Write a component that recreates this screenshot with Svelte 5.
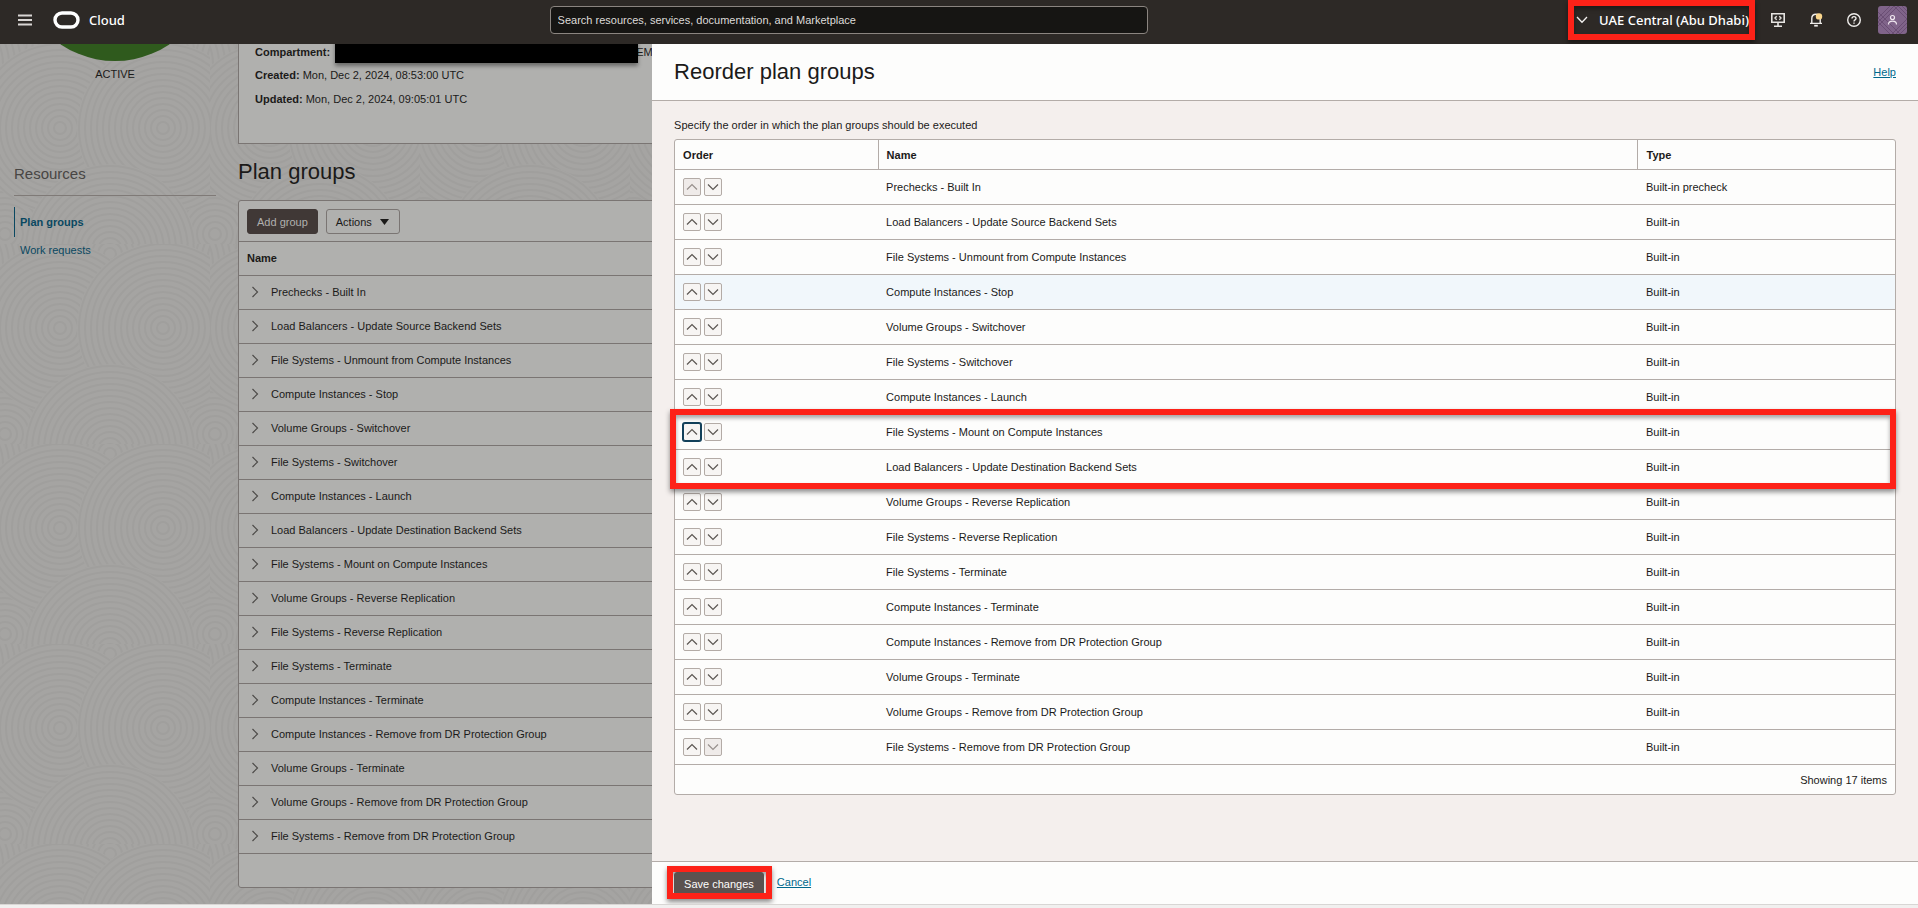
<script>
  const groups = [
    'Prechecks - Built In',
    'Load Balancers - Update Source Backend Sets',
    'File Systems - Unmount from Compute Instances',
    'Compute Instances - Stop',
    'Volume Groups - Switchover',
    'File Systems - Switchover',
    'Compute Instances - Launch',
    'Load Balancers - Update Destination Backend Sets',
    'File Systems - Mount on Compute Instances',
    'Volume Groups - Reverse Replication',
    'File Systems - Reverse Replication',
    'File Systems - Terminate',
    'Compute Instances - Terminate',
    'Compute Instances - Remove from DR Protection Group',
    'Volume Groups - Terminate',
    'Volume Groups - Remove from DR Protection Group',
    'File Systems - Remove from DR Protection Group'
  ];

  const swapped = [...groups];
  [swapped[7], swapped[8]] = [swapped[8], swapped[7]];
  let order = $state(swapped);

  function move(index, step) {
    const next = [...order];
    [next[index], next[index + step]] = [next[index + step], next[index]];
    order = next;
  }

  const rings = Array.from({ length: 14 }, (_, i) => 6 + i * 6);
  const swirls = [
    [-45, 20], [255, 20], [110, 10], [5, 190], [215, 190], [60, 84], [163, 84], [110, 206]
  ];
</script>

<div class="page">
  <header class="topbar">
    <button class="bare menu" aria-label="Navigation menu">
      <svg width="14" height="12" viewBox="0 0 14 12"><path d="M0 1.5h14M0 6h14M0 10.5h14" stroke="#d9d6d4" stroke-width="2" /></svg>
    </button>
    <a class="brand" href="#home">
      <svg width="27" height="18" viewBox="0 0 27 18"><rect x="2" y="2" width="23" height="14" rx="7" fill="none" stroke="#fff" stroke-width="3.4" /></svg>
      <span>Cloud</span>
    </a>
    <input class="search" type="text" aria-label="Search" placeholder="Search resources, services, documentation, and Marketplace" />
    <div class="tools">
      <button class="bare region marked">
        <svg width="12" height="8" viewBox="0 0 12 8"><path d="M1 1l5 5.2L11 1" fill="none" stroke="#f4f2f1" stroke-width="1.3" /></svg>
        <span>UAE Central (Abu Dhabi)</span>
      </button>
      <button class="bare" aria-label="Developer tools">
        <svg width="16" height="16" viewBox="0 0 16 16" fill="none" stroke="#e6e4e1" stroke-width="1.6">
          <path d="M1.8 1.8h12.4v8.4H1.8zM8 10.3v3.4M4 14.2h8" />
          <path d="M6.7 4.2L5 6l1.7 1.8M9.300 4.200L11 6 9.300 7.800" stroke-width="1.4" />
        </svg>
      </button>
      <button class="bare" aria-label="Announcements">
        <svg width="16" height="16" viewBox="0 0 16 16" fill="none" stroke="#efedeb" stroke-width="1.4">
          <path d="M2 11.400h12M3.800 11.300V6.600C3.800 4 5.400 2.200 8 2.200s4.200 1.800 4.200 4.400v4.700" />
          <path d="M6.200 13.700h3.600" stroke-width="1.800" />
          <circle cx="11" cy="4.400" r="3.200" fill="#f9d58c" stroke="none" />
        </svg>
      </button>
      <button class="bare" aria-label="Help">
        <svg width="16" height="16" viewBox="0 0 16 16" fill="none" stroke="#efedeb" stroke-width="1.400">
          <circle cx="8" cy="8" r="6.300" />
          <path d="M6 6.600C6 5.300 6.900 4.600 8 4.600s2 .7 2 1.800c0 1.500-2 1.500-2 3" />
          <path d="M8 10.400v1.400" />
        </svg>
      </button>
      <button class="bare avatar" aria-label="Profile">
        <svg width="29" height="28" viewBox="0 0 29 28">
          <rect width="29" height="28" fill="#80648a" />
          <path d="M-2 14L12 0M-2 18L16 0M-2 22L20 0M0 6l22 22M-2 10l18 18M-2 14l14 14M16 0l14 14M20 0l10 10M24 0l6 6M18 28l12-12M22 28l8-8M14 28l16-16" stroke="#6a4e74" stroke-width="1" />
          <circle cx="14.500" cy="11.500" r="2" fill="none" stroke="#f0e8f0" stroke-width="1.200" />
          <path d="M10.500 18.500c0-2.200 1.500-3.400 4-3.400s4 1.200 4 3.400" fill="none" stroke="#f0e8f0" stroke-width="1.200" />
        </svg>
      </button>
    </div>
  </header>

  <div class="stage">
    <section class="backdrop" aria-label="Plan details">
      <svg class="texture" width="100%" height="100%" aria-hidden="true">
        <defs>
          <pattern id="swirl" width="210" height="200" patternUnits="userSpaceOnUse">
            {#each swirls as [cx, cy]}
              <circle {cx} {cy} r="86" fill="#a5a4a2" />
              {#each rings as r}
                <circle {cx} {cy} {r} fill="none" stroke="#a09f9d" stroke-width="2" />
              {/each}
            {/each}
          </pattern>
        </defs>
        <rect width="100%" height="100%" fill="url(#swirl)" />
      </svg>

      <aside>
        <div class="status">
          <svg width="194" height="17" viewBox="0 0 194 17" aria-hidden="true"><circle cx="97" cy="-80" r="97" fill="#2f5a1d" /></svg>
          <span>ACTIVE</span>
        </div>
        <h2>Resources</h2>
        <nav>
          <a class="current" href="#groups">Plan groups</a>
          <a href="#requests">Work requests</a>
        </nav>
      </aside>

      <div class="content">
        <div class="card details">
          <p><b>Compartment:</b> <span class="redacted"></span><span>EM</span></p>
          <p><b>Created:</b> Mon, Dec 2, 2024, 08:53:00 UTC</p>
          <p><b>Updated:</b> Mon, Dec 2, 2024, 09:05:01 UTC</p>
        </div>
        <h1>Plan groups</h1>
        <div class="card">
          <div class="toolbar">
            <button class="btn dim">Add group</button>
            <button class="btn outline">Actions
              <svg width="9" height="6" viewBox="0 0 9 6"><path d="M0 0h9L4.500 6z" fill="#1b1a19" /></svg>
            </button>
          </div>
          <table class="plain">
            <thead><tr><th>Name</th></tr></thead>
            <tbody>
              {#each groups as name}
                <tr><td>
                  <div class="expand">
                    <svg width="8" height="12" viewBox="0 0 8 12"><path d="M1.500 1L6.500 6l-5 5" fill="none" stroke="#4c4a48" stroke-width="1.200" /></svg>
                    {name}
                  </div>
                </td></tr>
              {/each}
            </tbody>
          </table>
          <div class="cardfoot"></div>
        </div>
      </div>
    </section>

    <section class="drawer" aria-labelledby="drawer-title">
      <div class="drawer-head">
        <h1 id="drawer-title">Reorder plan groups</h1>
        <a href="#help">Help</a>
      </div>
      <div class="drawer-body">
        <p>Specify the order in which the plan groups should be executed</p>
        <div class="frame">
          <table class="reorder">
            <thead><tr><th class="c-order">Order</th><th>Name</th><th class="c-type">Type</th></tr></thead>
            <tbody>
              {#each order as name, i (name)}
                <tr class:hover={i === 3}>
                  <td>
                    <div class="arrows">
                      <button class:focus={i === 7} disabled={i === 0} aria-label="Move {name} up" onclick={() => move(i, -1)}>
                        <svg width="12" height="8" viewBox="0 0 12 8"><path d="M1 6.500L6 1.500l5 5" /></svg>
                      </button>
                      <button disabled={i === order.length - 1} aria-label="Move {name} down" onclick={() => move(i, 1)}>
                        <svg width="12" height="8" viewBox="0 0 12 8"><path d="M1 1.500l5 5 5-5" /></svg>
                      </button>
                    </div>
                  </td>
                  <td>{name}</td>
                  <td>{name.startsWith('Prechecks') ? 'Built-in precheck' : 'Built-in'}</td>
                </tr>
              {/each}
            </tbody>
          </table>
          <div class="count">Showing {order.length} items</div>
          <div class="callout" aria-hidden="true"></div>
        </div>
      </div>
      <div class="drawer-foot">
        <div class="savebox marked"><button class="btn save">Save changes</button></div>
        <a href="#cancel">Cancel</a>
      </div>
    </section>
  </div>
  <div class="strip"></div>
</div>

<style>
  :global(body) { background: #f1f0ef; }
  .page {
    display: flex;
    flex-direction: column;
    height: 100vh;
    overflow: hidden;
    font: 11px/16px "Liberation Sans", Arial, sans-serif;
    color: #1b1a19;
  }
  .page * { box-sizing: border-box; }
  h1, h2, p { margin: 0; font-weight: 400; }
  h1 { font-size: 22px; line-height: 28px; }
  a { color: #00688c; }
  button { font: inherit; color: inherit; cursor: pointer; }
  svg { display: block; flex: none; }

  .topbar {
    display: grid;
    grid-template-columns: 54fr 598px 76fr;
    grid-template-areas: "left search tools";
    align-items: center;
    flex: none;
    height: 44px;
    padding: 0 11px 4px 10px;
    background: #2d2926;
    color: #fff;
  }
  .bare { display: flex; align-items: center; padding: 0; border: 0; background: none; }
  .menu { grid-area: left; justify-self: start; padding: 8px; }
  .brand {
    grid-area: left;
    justify-self: start;
    display: flex;
    align-items: center;
    gap: 9px;
    margin-left: 43px;
    color: #fff;
    text-decoration: none;
    font: 500 13px/18px "Noto Sans", "Open Sans", sans-serif;
  }
  .search {
    grid-area: search;
    width: 100%;
    height: 28px;
    padding: 0 7px;
    border: 1px solid #8b8580;
    border-radius: 4px;
    background: #161513;
    color: #fff;
    font: inherit;
  }
  .search::placeholder { color: #dedbd9; opacity: 1; }
  .tools {
    grid-area: tools;
    justify-self: end;
    display: flex;
    align-items: center;
    gap: 22px;
  }
  .marked { border: 6px solid #fd2218; box-shadow: 0 3px 5px rgba(0, 0, 0, .45), inset 0 3px 4px rgba(0, 0, 0, .35); }
  .bare.region {
    gap: 11px;
    height: 40px;
    padding: 0 0 0 2px;
    margin-right: -7px;
    border: 6px solid #fd2218;
    font: 500 13px/18px "Noto Sans", "Open Sans", sans-serif;
    white-space: nowrap;
  }
  .avatar { border-radius: 3px; overflow: hidden; margin-left: -6px; }

  .stage { display: grid; grid-template-columns: 34% 66%; flex: 1; min-height: 0; }
  .backdrop { position: relative; display: flex; gap: 22px; overflow: hidden; background: #a5a4a2; }
  .texture { position: absolute; inset: 0; }
  aside { position: relative; flex: none; width: 216px; padding-left: 14px; }
  .status { display: flex; flex-direction: column; align-items: center; gap: 5px; }
  .status svg { max-width: 100%; }
  h2 { margin-top: 81px; padding: 0 0 10px; border-bottom: 1px solid #7f7a77; font-size: 15px; line-height: 22px; color: #484644; }
  nav { display: flex; flex-direction: column; gap: 5px; margin-top: 11px; }
  nav a { padding-left: 6px; color: #0a4861; text-decoration: none; }
  nav .current { padding: 7px 0 7px 5px; border-left: 1px solid #0a4861; font-weight: 700; }

  .content { position: relative; flex: none; width: 800px; }
  .card { border: 1px solid #7a7573; border-radius: 3px; background: #b0b0ae; }
  .details { height: 100px; padding: 0 16px; border-top: 0; border-radius: 0; }
  .details p { display: flex; align-items: center; gap: 3px; height: 24px; }
  .details p:first-child { align-items: flex-start; height: 19px; }
  .redacted { position: relative; z-index: 2; flex: none; width: 303px; height: 26px; margin: -7px -5px 0 2px; background: #000; box-shadow: 0 3px 4px rgba(0, 0, 0, .4); }
  .content h1 { margin: 14px 0; }
  .toolbar { display: flex; gap: 8px; padding: 8px 8px 7px; border-bottom: 1px solid #7a7573; }
  .btn { display: flex; align-items: center; gap: 8px; height: 25px; padding: 0 9px; border: 1px solid #7a7573; border-radius: 3px; background: none; }
  .dim { border-color: #403836; background: #403836; color: #b0b0ae; }
  .outline svg { margin-right: 1px; }
  table { width: 100%; border-collapse: collapse; table-layout: fixed; }
  th, td { padding: 0 8px; text-align: left; }
  .plain th { height: 33px; }
  .plain td { height: 34px; border-top: 1px solid #7a7573; }
  .expand { display: flex; align-items: center; gap: 12px; padding-left: 4px; }
  .cardfoot { height: 34px; border-top: 1px solid #7a7573; }

  .drawer { display: flex; flex-direction: column; min-width: 0; background: #f4efed; }
  .drawer-head, .drawer-foot { display: flex; align-items: center; flex: none; background: #fdfdfc; }
  .drawer-head { justify-content: space-between; height: 57px; padding: 0 22px; border-bottom: 1px solid #b3aca8; }
  .drawer-body { flex: 1; min-height: 0; padding: 16px 22px; }
  .drawer-body p { margin-bottom: 6px; }
  .frame { position: relative; border: 1px solid #b3aca8; border-radius: 3px; background: #fdfdfc; }
  .reorder th { height: 29px; padding-top: 2px; }
  .reorder th + th { border-left: 1px solid #b3aca8; }
  .c-order { width: 203px; }
  .c-type { width: 257px; }
  .reorder td { height: 35px; border-top: 1px solid #b3aca8; }
  .hover { background: #f1f7fb; }
  .arrows { display: flex; gap: 3px; }
  .arrows button { display: grid; place-items: center; width: 18px; height: 18px; padding: 0; border: 1px solid #b3aba6; border-radius: 2px; background: #f7f5f3; }
  .arrows button:disabled { background: #efebe9; cursor: default; }
  .arrows path { fill: none; stroke: #5b5652; stroke-width: 1.2; }
  .arrows button:disabled path { stroke: #97908c; }
  .arrows .focus { border-color: #12405a; box-shadow: 0 0 0 1px #12405a; }
  .count { height: 30px; padding: 0 8px; border-top: 1px solid #b3aca8; text-align: right; line-height: 30px; }
  .callout { position: absolute; left: -5px; right: -1px; top: 269px; height: 80px; border: 6px solid #fd2218; box-shadow: 0 3px 5px rgba(0, 0, 0, .45), inset 0 3px 4px rgba(0, 0, 0, .35); pointer-events: none; }
  .drawer-foot { gap: 5px; height: 43px; padding: 0 15px 2px; border-top: 1px solid #b3aca8; }
  .savebox { display: flex; align-items: flex-start; height: 33px; padding: 0 2px 0 1px; overflow: hidden; }
  .save { border-color: #5b5250; background: #5b5250; color: #fdfdfc; }
  .strip { flex: none; height: 4px; border-top: 1px solid #d8d6d4; background: #f1f0ef; }
</style>
